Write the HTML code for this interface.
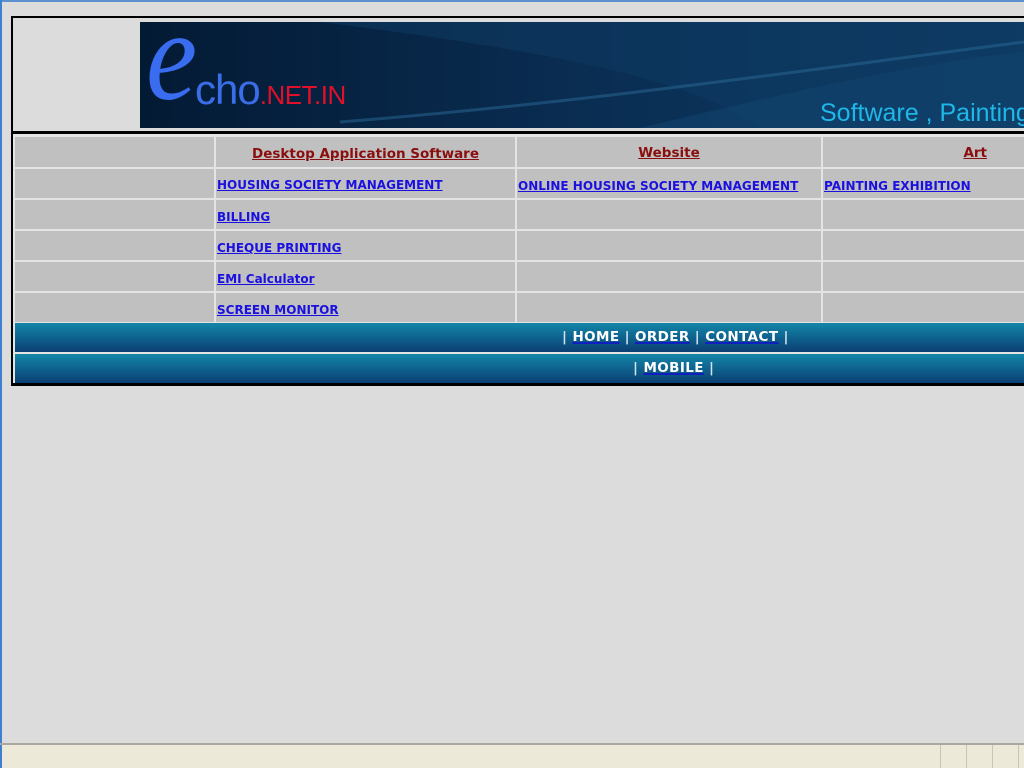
<!DOCTYPE html>
<html><head><meta charset="utf-8"><style>
*{margin:0;padding:0;box-sizing:border-box}
html,body{width:1024px;height:768px;overflow:hidden;background:#dcdcdc;font-family:"DejaVu Sans","Liberation Sans",sans-serif}
.abs{position:absolute}
.cell{position:absolute;background:#c0c0c0}
a{color:#1a10e0;font-weight:bold;font-size:12px;text-decoration:underline}
.h{color:#8a0e0e;font-size:13.5px}
.nav{position:absolute;left:15px;width:1009px;height:29px;background:linear-gradient(#1486a8,#0e5f8c 55%,#0b3e72);color:#cfe3ef;font-family:"DejaVu Sans",sans-serif;font-weight:bold;font-size:13.5px;letter-spacing:0.4px;line-height:29px;text-align:left;white-space:nowrap}
.nav a{color:#fff;font-size:13.5px;text-decoration:underline;text-decoration-color:#1020c0;text-decoration-thickness:2px}
</style></head><body>
<div class="abs" style="left:0;top:0;width:1024px;height:2px;background:#5a8fd0"></div>
<div class="abs" style="left:0;top:0;width:2px;height:768px;background:#3d7fd0"></div>
<div class="abs" style="left:11px;top:16px;width:1020px;height:370px;border:2px solid #000;border-right:none;background:#dcdcdc"></div>
<div class="abs" style="left:140px;top:22px;width:884px;height:106px;background:#05203e;overflow:hidden">
<svg width="884" height="106" style="position:absolute;left:0;top:0">
<defs><linearGradient id="g" x1="0" x2="1"><stop offset="0" stop-color="#031a34"/><stop offset="0.5" stop-color="#0a2d52"/><stop offset="1" stop-color="#0d3c66"/></linearGradient></defs>
<rect width="884" height="106" fill="url(#g)"/>
<path d="M180 0 C420 30 560 60 620 106 L884 106 L884 0 Z" fill="#0f3b62" opacity="0.55"/>
<path d="M200 100 C450 80 650 50 884 20" stroke="#2a6a98" stroke-width="3" fill="none" opacity="0.5"/>
<path d="M500 106 C650 70 780 40 884 30 L884 106 Z" fill="#114670" opacity="0.5"/>
</svg>
<div class="abs" style="left:6px;top:-30px;font-family:'Liberation Serif',serif;font-style:italic;font-size:128px;line-height:1;color:#3a6cf0;transform:scaleX(0.9);transform-origin:left top">e</div>
<div class="abs" style="left:55px;top:47px;font-family:'Liberation Sans',sans-serif;font-size:42px;line-height:1;color:#3a6ee8;letter-spacing:-1px;white-space:nowrap">cho<span style="font-size:26px;color:#e0102a;letter-spacing:-0.5px">.NET.IN</span></div>
<div class="abs" style="left:680px;top:77px;font-family:'Liberation Sans',sans-serif;font-size:25px;color:#1fb6e8;white-space:nowrap">Software , Painting</div>
</div>
<div class="abs" style="left:13px;top:131px;width:1011px;height:3px;background:#000"></div>
<div class="abs" style="left:13px;top:134px;width:1011px;height:190px;background:#e4e4e4"></div>
<div class="cell" style="left:15px;top:137px;width:199px;height:30px"></div>
<div class="cell" style="left:216px;top:137px;width:299px;height:30px;text-align:center;line-height:32px"><a class="h">Desktop Application Software</a></div>
<div class="cell" style="left:517px;top:137px;width:304px;height:30px;text-align:center;line-height:30px"><a class="h">Website</a></div>
<div class="cell" style="left:823px;top:137px;width:201px;height:30px;text-align:right;padding-right:37px;line-height:30px"><a class="h">Art</a></div>

<div class="cell" style="left:15px;top:169px;width:199px;height:29px"></div>
<div class="cell" style="left:216px;top:169px;width:299px;height:29px;line-height:29px;padding-left:1px;white-space:nowrap"><a>HOUSING SOCIETY MANAGEMENT</a></div>
<div class="cell" style="left:517px;top:169px;width:304px;height:29px;line-height:31px;padding-left:1px;white-space:nowrap"><a>ONLINE HOUSING SOCIETY MANAGEMENT</a></div>
<div class="cell" style="left:823px;top:169px;width:201px;height:29px;line-height:31px;padding-left:1px;white-space:nowrap"><a>PAINTING EXHIBITION</a></div>

<div class="cell" style="left:15px;top:200px;width:199px;height:29px"></div>
<div class="cell" style="left:216px;top:200px;width:299px;height:29px;line-height:31px;padding-left:1px"><a>BILLING</a></div>
<div class="cell" style="left:517px;top:200px;width:304px;height:29px"></div>
<div class="cell" style="left:823px;top:200px;width:201px;height:29px"></div>

<div class="cell" style="left:15px;top:231px;width:199px;height:29px"></div>
<div class="cell" style="left:216px;top:231px;width:299px;height:29px;line-height:31px;padding-left:1px"><a>CHEQUE PRINTING</a></div>
<div class="cell" style="left:517px;top:231px;width:304px;height:29px"></div>
<div class="cell" style="left:823px;top:231px;width:201px;height:29px"></div>

<div class="cell" style="left:15px;top:262px;width:199px;height:29px"></div>
<div class="cell" style="left:216px;top:262px;width:299px;height:29px;line-height:31px;padding-left:1px"><a>EMI Calculator</a></div>
<div class="cell" style="left:517px;top:262px;width:304px;height:29px"></div>
<div class="cell" style="left:823px;top:262px;width:201px;height:29px"></div>

<div class="cell" style="left:15px;top:293px;width:199px;height:29px"></div>
<div class="cell" style="left:216px;top:293px;width:299px;height:29px;line-height:31px;padding-left:1px"><a>SCREEN MONITOR</a></div>
<div class="cell" style="left:517px;top:293px;width:304px;height:29px"></div>
<div class="cell" style="left:823px;top:293px;width:201px;height:29px"></div>

<div class="abs" style="left:13px;top:322px;width:1011px;height:62px;background:#e4e4e4"></div>
<div class="nav" style="top:323px;padding-left:547px">| <a>HOME</a> | <a>ORDER</a> | <a>CONTACT</a> |</div>
<div class="nav" style="top:354px;padding-left:618px">| <a>MOBILE</a> |</div>
<div class="abs" style="left:13px;top:383px;width:1011px;height:2px;background:#000"></div>

<div class="abs" style="left:0;top:743px;width:1024px;height:2px;background:#a8a8a0"></div>
<div class="abs" style="left:2px;top:745px;width:1022px;height:23px;background:#ece9d8"></div>
<div class="abs" style="left:940px;top:745px;width:1px;height:23px;background:#c8c4b0"></div>
<div class="abs" style="left:966px;top:745px;width:1px;height:23px;background:#c8c4b0"></div>
<div class="abs" style="left:992px;top:745px;width:1px;height:23px;background:#c8c4b0"></div>
<div class="abs" style="left:1018px;top:745px;width:1px;height:23px;background:#c8c4b0"></div>
</body></html>
